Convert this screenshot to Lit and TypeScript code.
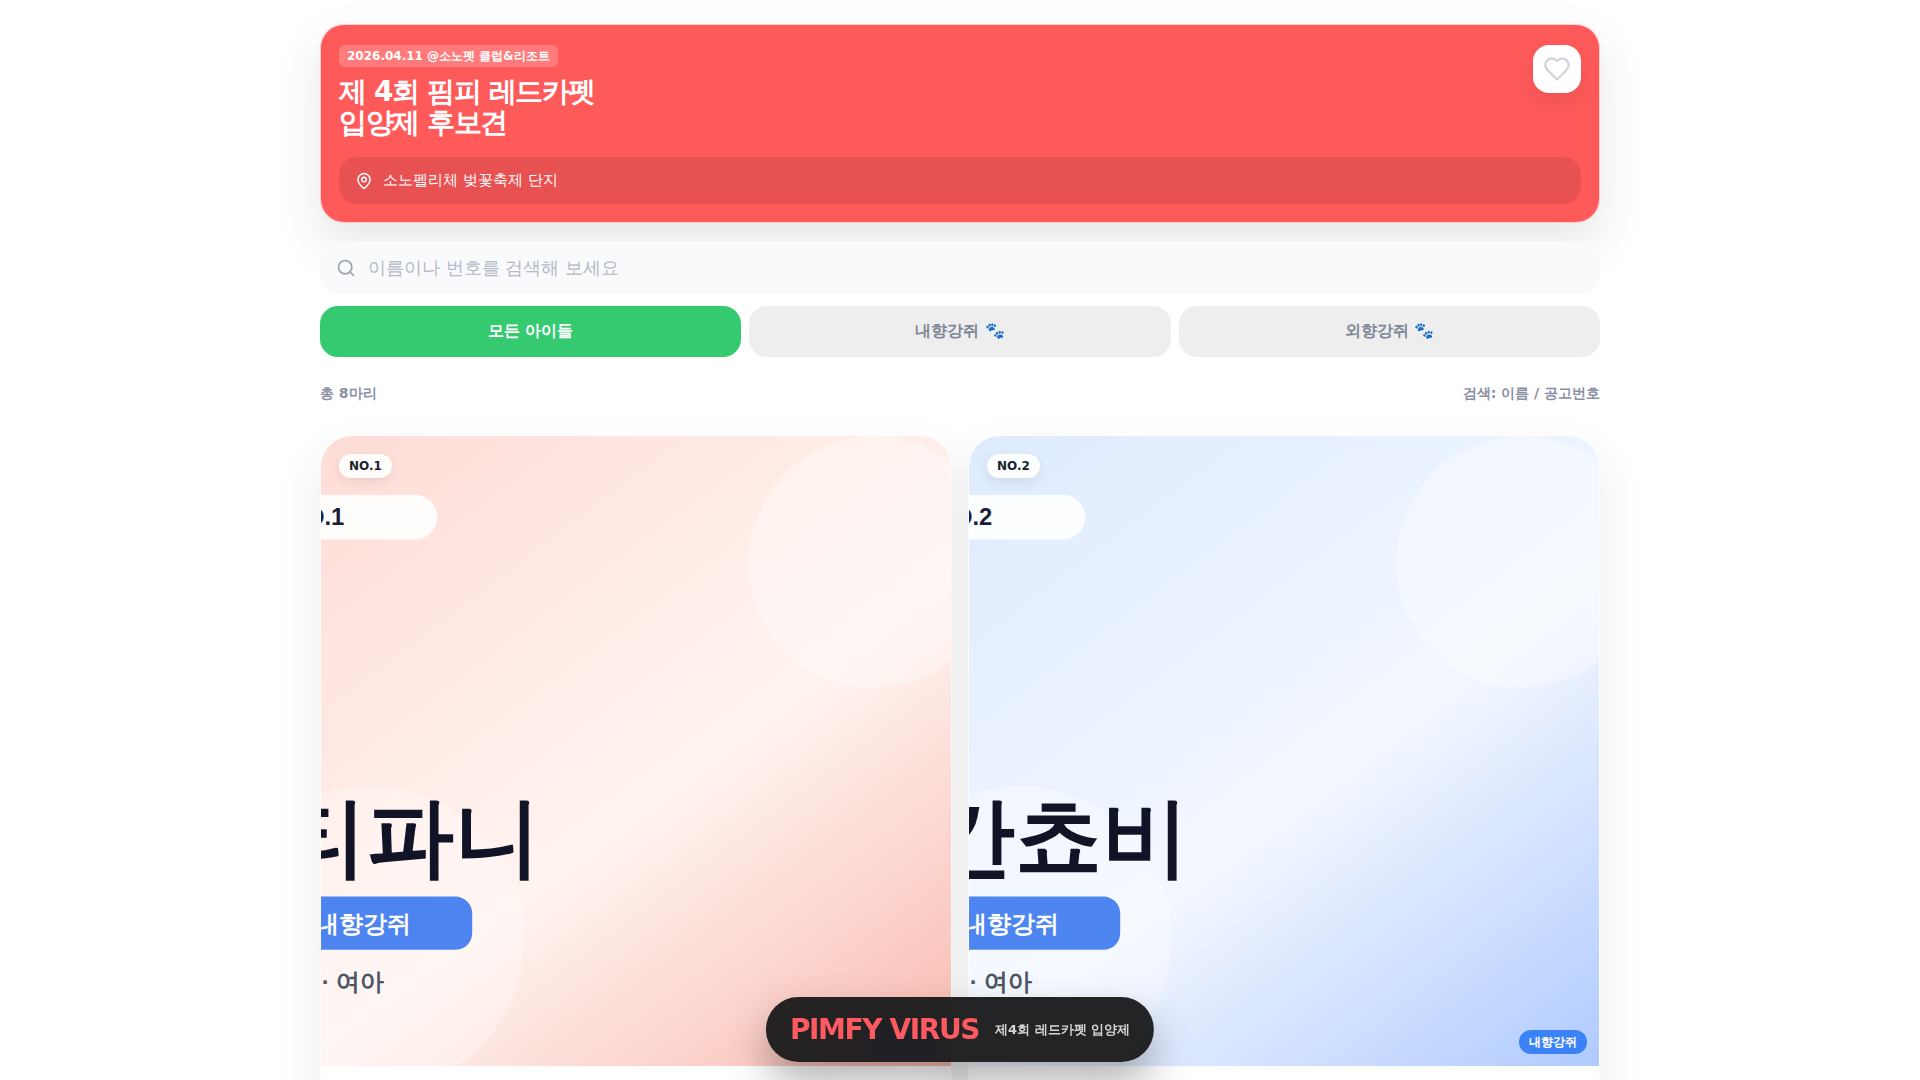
import { LitElement, html, css, svg } from "lit";
import { customElement, property, state } from "lit/decorators.js";

type Palette = { from: string; mid: string; to: string };
type Dog = { no: number; name: string; kind: string; info: string; palette: Palette };

const pink: Palette = { from: "#ffd9d3", mid: "#fff4f0", to: "#f8b0a6" };
const blue: Palette = { from: "#dbe9ff", mid: "#f3f7ff", to: "#a5c3ff" };

const dogs: Dog[] = [
  { no: 1, name: "티파니", kind: "내향강쥐", info: "믹스 · 여아", palette: pink },
  { no: 2, name: "칸쵸비", kind: "내향강쥐", info: "믹스 · 여아", palette: blue },
];

@customElement("dog-card")
class DogCard extends LitElement {
  static styles = css`
    :host {
      display: block;
      min-width: 0;
    }
    .card {
      border: 1px solid rgba(255, 255, 255, 0.7);
      border-radius: 32px;
      overflow: hidden;
      background: #fff;
      background-clip: padding-box;
      box-shadow: 0 20px 50px rgba(0, 0, 0, 0.08);
    }
    .photo {
      position: relative;
      aspect-ratio: 1;
    }
    .art {
      display: block;
      width: 100%;
      height: 100%;
    }
    .label {
      font-family: "Liberation Sans", Arial, sans-serif;
      font-weight: 700;
    }
    .tag {
      position: absolute;
      display: flex;
      align-items: center;
      height: 24px;
      box-sizing: border-box;
      padding: 0 10px;
      border-radius: 12px;
      font-size: 12px;
      font-weight: 700;
    }
    .no {
      top: 18px;
      left: 18px;
      color: #1a1f2e;
      background: rgba(255, 255, 255, 0.92);
      box-shadow: 0 4px 12px rgba(0, 0, 0, 0.08);
    }
    .kind {
      right: 12px;
      bottom: 12px;
      color: #fff;
      background: #3b82f6;
    }
    .body {
      min-height: 96px;
    }
  `;
  @property({ attribute: false }) dog!: Dog;

  render() {
    const { no, name, kind, info, palette } = this.dog;
    return html`
      <article class="card">
        <div class="photo">
          <svg class="art" viewBox="0 0 1200 900" preserveAspectRatio="xMidYMid slice">
            ${svg`
              <defs>
                <linearGradient id="bg" x1="0" y1="0" x2="1" y2="1">
                  <stop offset="0" stop-color=${palette.from}></stop>
                  <stop offset="0.55" stop-color=${palette.mid}></stop>
                  <stop offset="1" stop-color=${palette.to}></stop>
                </linearGradient>
              </defs>
              <rect width="1200" height="900" fill="url(#bg)"></rect>
              <circle cx="940" cy="180" r="180" fill="#fff" fill-opacity="0.35"></circle>
              <circle cx="220" cy="720" r="220" fill="#fff" fill-opacity="0.3"></circle>
              <rect x="72" y="84" width="244" height="64" rx="32" fill="#fff" fill-opacity="0.9"></rect>
              <text class="label" x="104" y="127" font-size="34" fill="#1a1f36">NO.${no}</text>
              <text class="label" x="91" y="616" font-size="124" fill="#111427">${name}</text>
              <rect x="72" y="658" width="294" height="76" rx="24" fill="#3b78f0" fill-opacity="0.9"></rect>
              <text class="label" x="142" y="708" font-size="34" fill="#fff">${kind}</text>
              <text class="label" x="73" y="791" font-size="34" fill="#4b5563">${info}</text>
            `}
          </svg>
          <span class="tag no">NO.${no}</span>
          <span class="tag kind">${kind}</span>
        </div>
        <div class="body"></div>
      </article>
    `;
  }
}

@customElement("app-root")
class AppRoot extends LitElement {
  static styles = css`
    :host {
      display: block;
      height: 100vh;
      overflow: hidden;
      background: #fff;
      font-family: "DejaVu Sans", sans-serif;
    }
    .page {
      max-width: 1280px;
      margin: 0 auto;
      padding: 24px 16px;
    }
    .hero {
      display: flex;
      flex-direction: column;
      gap: 19px;
      padding: 20px 18px 18px;
      border: 1px solid rgba(255, 255, 255, 0.7);
      border-radius: 24px;
      background: #ff5a5a;
      box-shadow: 0 20px 50px rgba(0, 0, 0, 0.1);
      color: #fff;
    }
    .top {
      display: flex;
      justify-content: space-between;
      align-items: flex-start;
    }
    .heading {
      display: flex;
      flex-direction: column;
      align-items: flex-start;
      gap: 9px;
    }
    .date {
      padding: 0 8px;
      border-radius: 6px;
      background: rgba(255, 255, 255, 0.2);
      font-size: 12px;
      font-weight: 700;
      line-height: 22px;
    }
    h1 {
      margin: 0;
      font-size: 28px;
      font-weight: 700;
      line-height: 31px;
      letter-spacing: -0.05em;
    }
    .like {
      display: grid;
      place-items: center;
      width: 48px;
      height: 48px;
      padding: 0;
      border: 0;
      border-radius: 16px;
      background: #fff;
      color: #d1d5db;
      box-shadow: 0 10px 24px rgba(0, 0, 0, 0.08);
    }
    .place {
      display: flex;
      align-items: center;
      gap: 10px;
      height: 47px;
      padding: 0 16px;
      border-radius: 18px;
      background: rgba(0, 0, 0, 0.09);
      font-size: 15px;
    }
    .icon {
      display: block;
      fill: none;
      stroke: currentColor;
      stroke-width: 2;
      stroke-linecap: round;
      stroke-linejoin: round;
    }
    .search {
      display: flex;
      align-items: center;
      gap: 12px;
      height: 53px;
      margin-top: 18px;
      padding: 0 16px;
      border-radius: 18px;
      background: #f8fafc;
      color: #9ca3af;
    }
    .field {
      flex: 1;
      min-width: 0;
      padding: 0;
      border: 0;
      outline: 0;
      background: none;
      font: inherit;
      font-size: 18px;
      color: #1a1f2e;
    }
    .field::placeholder {
      color: #b4b9c6;
    }
    .tabs {
      display: grid;
      grid-template-columns: repeat(3, 1fr);
      gap: 8px;
      margin-top: 12px;
    }
    .tab {
      height: 51px;
      border: 0;
      border-radius: 18px;
      background: #eee;
      color: #808796;
      font: inherit;
      font-size: 16px;
      font-weight: 700;
    }
    .tab.on {
      background: #35ca70;
      color: #fff;
    }
    .meta {
      display: flex;
      justify-content: space-between;
      margin: 26px 0 32px;
      font-size: 14px;
      font-weight: 700;
      line-height: 20px;
      color: #8b90a5;
    }
    .grid {
      display: grid;
      grid-template-columns: repeat(2, 1fr);
      gap: 16px;
    }
    .brand {
      position: fixed;
      left: 50%;
      bottom: 18px;
      transform: translateX(-50%);
      display: flex;
      align-items: center;
      gap: 16px;
      height: 65px;
      padding: 0 24px;
      border-radius: 33px;
      background: rgba(24, 24, 26, 0.95);
      backdrop-filter: blur(10px);
      box-shadow: 0 20px 40px rgba(0, 0, 0, 0.3);
      white-space: nowrap;
    }
    .logo {
      color: #ff5a5f;
      font-size: 28px;
      font-weight: 700;
      letter-spacing: -0.05em;
    }
    .note {
      color: #d4d4d4;
      font-size: 13px;
      font-weight: 700;
    }
  `;
  @state() private active = 0;
  @state() private query = "";

  render() {
    const tabs = ["모든 아이들", "내향강쥐 🐾", "외향강쥐 🐾"];
    return html`
      <main class="page">
        <header class="hero">
          <div class="top">
            <div class="heading">
              <span class="date">2026.04.11 @소노펫 클럽&amp;리조트</span>
              <h1>제 4회 핌피 레드카펫<br />입양제 후보견</h1>
            </div>
            <button class="like" type="button" aria-label="찜">
              <svg class="icon" width="28" height="28" viewBox="0 0 24 24">
                <path d="M19 14c1.490-1.460 3-3.210 3-5.500A5.500 5.500 0 0 0 16.500 3c-1.760 0-3 .5-4.500 2-1.500-1.500-2.740-2-4.500-2A5.500 5.500 0 0 0 2 8.500c0 2.300 1.500 4.050 3 5.500l7 7Z"></path>
              </svg>
            </button>
          </div>
          <div class="place">
            <svg class="icon" width="18" height="18" viewBox="0 0 24 24">
              <path d="M20 10c0 6-8 12-8 12s-8-6-8-12a8 8 0 0 1 16 0Z"></path>
              <circle cx="12" cy="10" r="3"></circle>
            </svg>
            <span>소노펠리체 벚꽃축제 단지</span>
          </div>
        </header>
        <label class="search">
          <svg class="icon" width="20" height="20" viewBox="0 0 24 24">
            <circle cx="11" cy="11" r="8"></circle>
            <path d="m21 21-4.300-4.300"></path>
          </svg>
          <input
            class="field"
            type="text"
            aria-label="검색"
            placeholder="이름이나 번호를 검색해 보세요"
            .value=${this.query}
            @input=${(e: Event) => (this.query = (e.target as HTMLInputElement).value)}
          />
        </label>
        <nav class="tabs">
          ${tabs.map(
            (t, i) => html`<button
              type="button"
              class=${i === this.active ? "tab on" : "tab"}
              @click=${() => (this.active = i)}
            >${t}</button>`
          )}
        </nav>
        <div class="meta"><span>총 8마리</span><span>검색: 이름 / 공고번호</span></div>
        <section class="grid">
          ${dogs.map((d) => html`<dog-card .dog=${d}></dog-card>`)}
        </section>
      </main>
      <footer class="brand">
        <span class="logo">PIMFY VIRUS</span>
        <span class="note">제4회 레드카펫 입양제</span>
      </footer>
    `;
  }
}
